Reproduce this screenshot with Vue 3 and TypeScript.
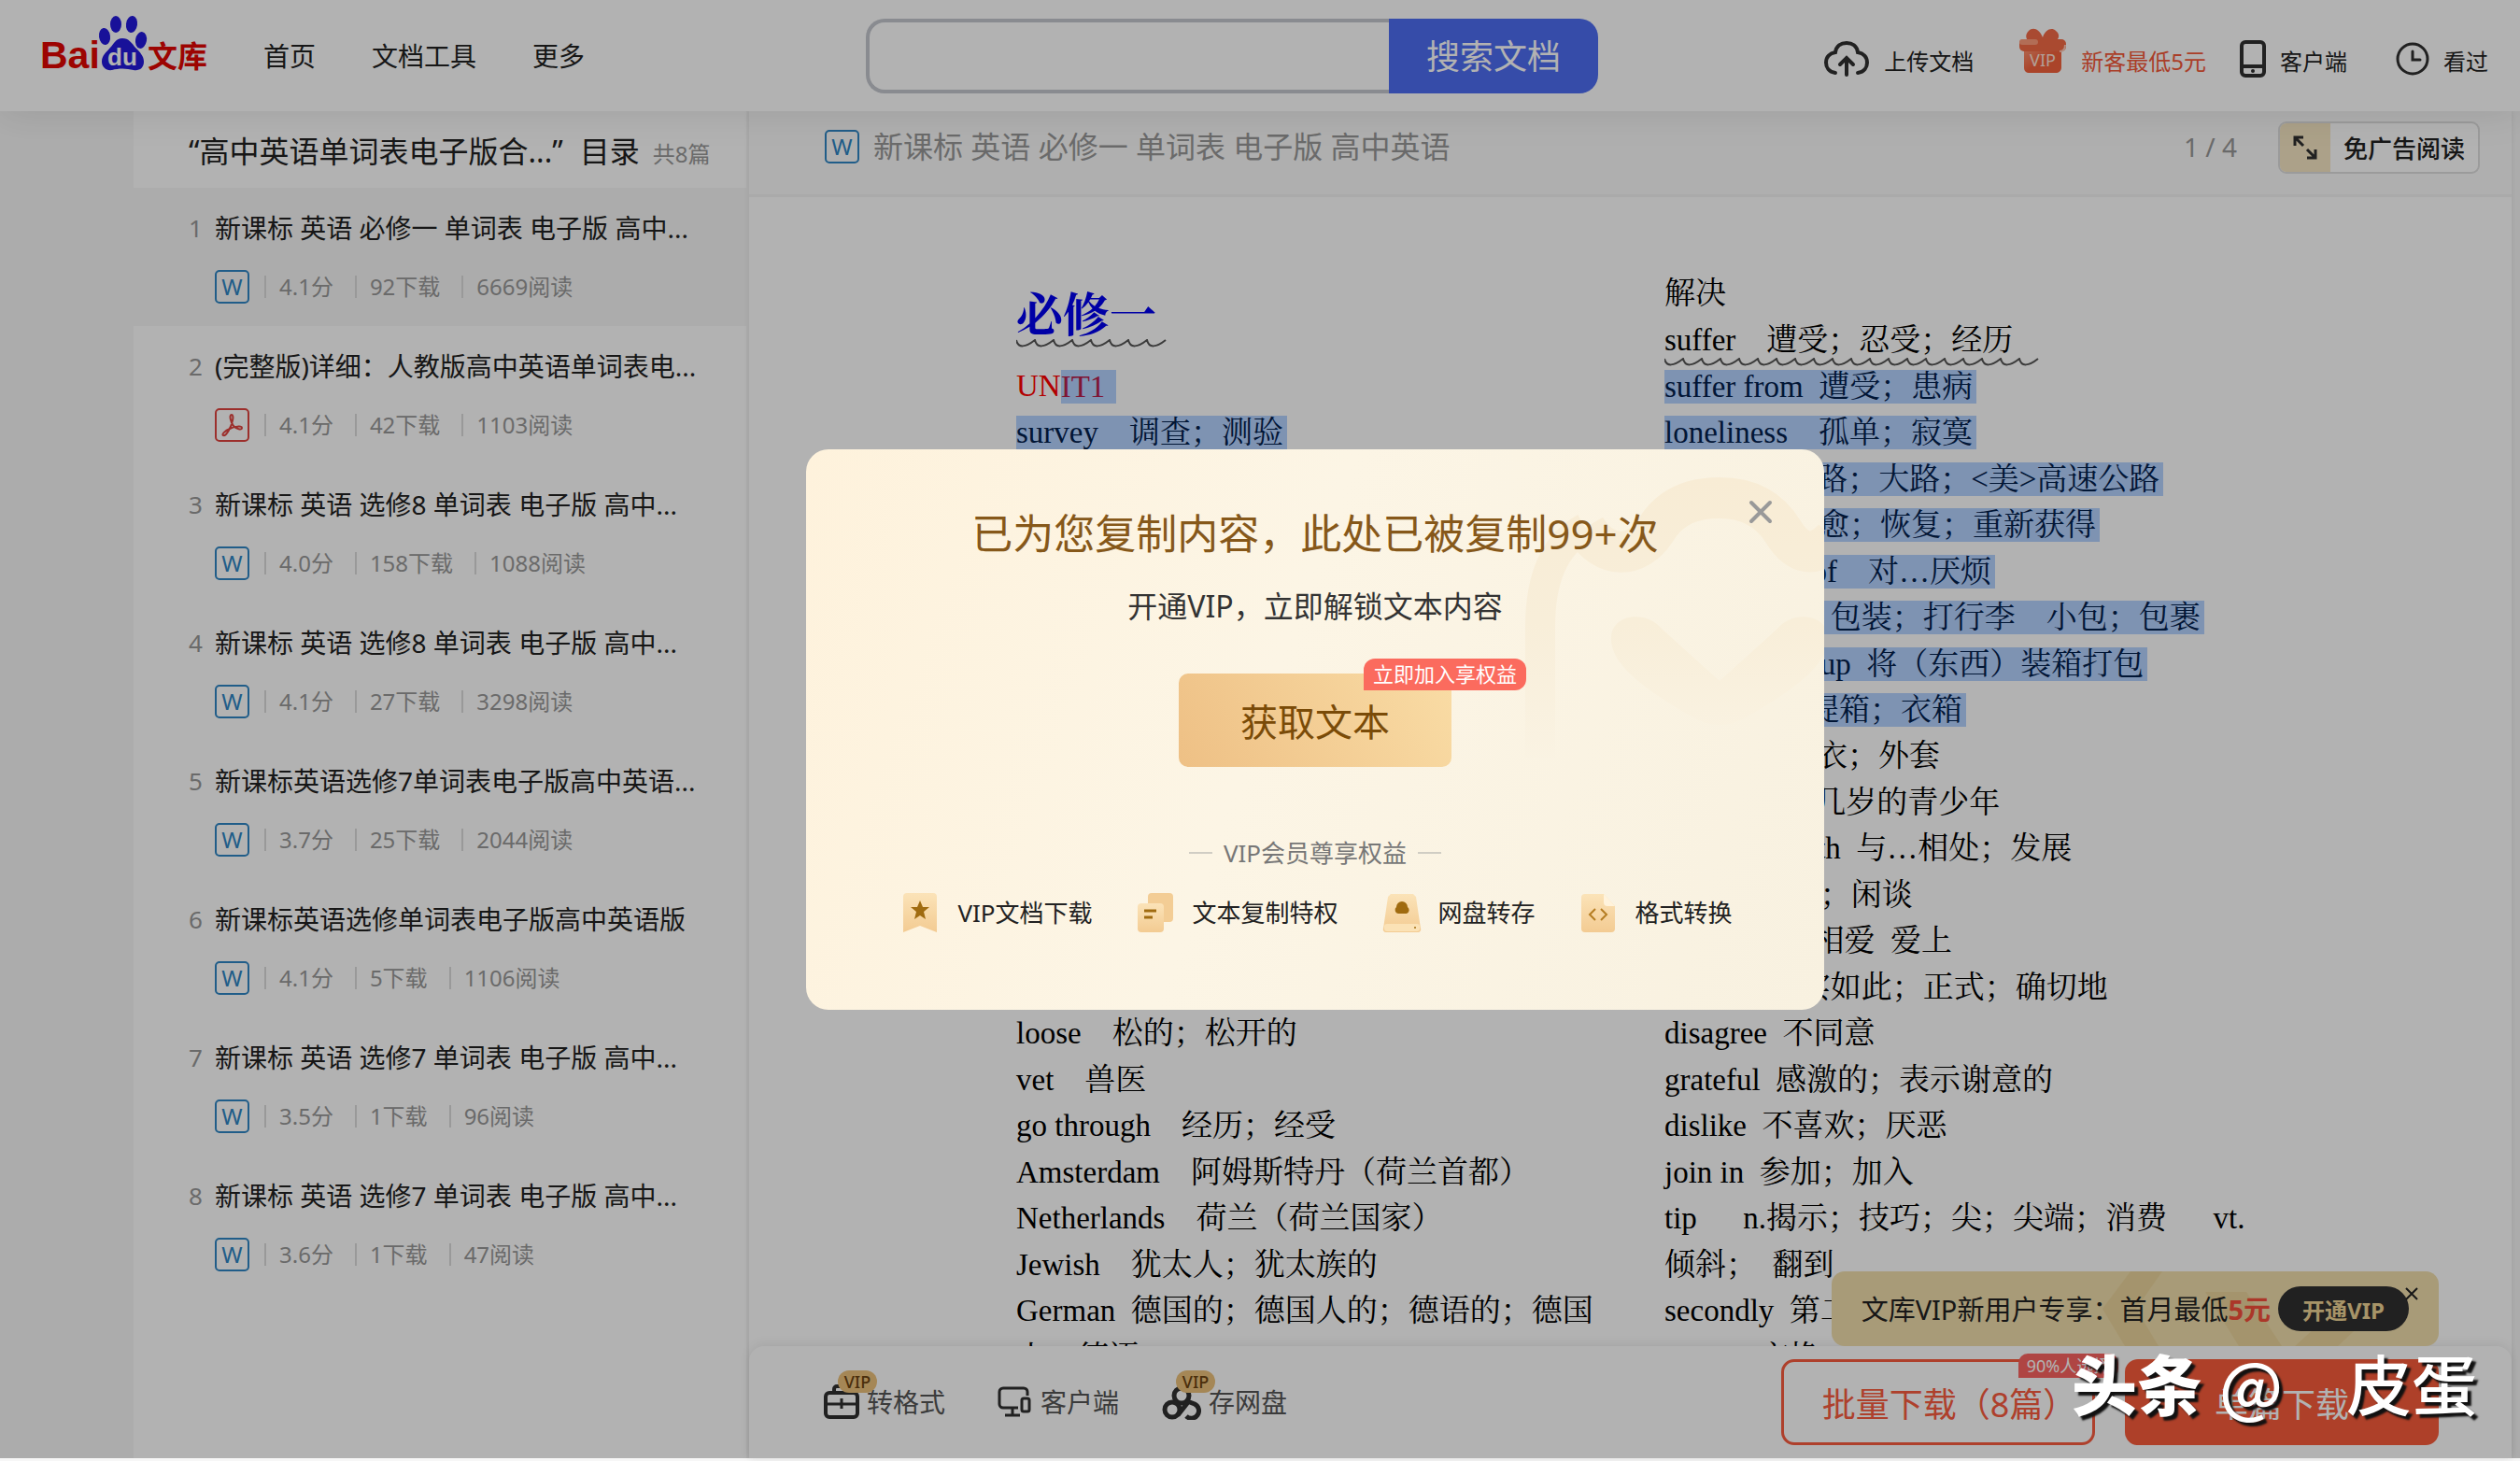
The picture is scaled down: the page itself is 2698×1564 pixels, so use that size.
<script setup lang="ts">
import { ref } from 'vue'

interface DocItem {
  title: string
  kind: 'word' | 'pdf'
  score: string
  downloads: string
  reads: string
}

interface Line {
  text: string
  marked?: boolean
  wavy?: boolean
}

const keyword = ref('')

const items: DocItem[] = [
  { title: '新课标 英语 必修一 单词表 电子版 高中...', kind: 'word', score: '4.1分', downloads: '92下载', reads: '6669阅读' },
  { title: '(完整版)详细：人教版高中英语单词表电...', kind: 'pdf', score: '4.1分', downloads: '42下载', reads: '1103阅读' },
  { title: '新课标 英语 选修8 单词表 电子版 高中...', kind: 'word', score: '4.0分', downloads: '158下载', reads: '1088阅读' },
  { title: '新课标 英语 选修8 单词表 电子版 高中...', kind: 'word', score: '4.1分', downloads: '27下载', reads: '3298阅读' },
  { title: '新课标英语选修7单词表电子版高中英语...', kind: 'word', score: '3.7分', downloads: '25下载', reads: '2044阅读' },
  { title: '新课标英语选修单词表电子版高中英语版', kind: 'word', score: '4.1分', downloads: '5下载', reads: '1106阅读' },
  { title: '新课标 英语 选修7 单词表 电子版 高中...', kind: 'word', score: '3.5分', downloads: '1下载', reads: '96阅读' },
  { title: '新课标 英语 选修7 单词表 电子版 高中...', kind: 'word', score: '3.6分', downloads: '1下载', reads: '47阅读' },
]

const leftLines: Line[] = [
  { text: 'loose　松的；松开的' },
  { text: 'vet　兽医' },
  { text: 'go through　经历；经受' },
  { text: 'Amsterdam　阿姆斯特丹（荷兰首都）' },
  { text: 'Netherlands　荷兰（荷兰国家）' },
  { text: 'Jewish　犹太人；犹太族的' },
  { text: 'German  德国的；德国人的；德语的；德国' },
  { text: '人；德语' },
]

const rightLines: Line[] = [
  { text: '解决' },
  { text: 'suffer　遭受；忍受；经历', wavy: true },
  { text: 'suffer from  遭受；患病', marked: true },
  { text: 'loneliness　孤单；寂寞', marked: true },
  { text: 'highway  公路；大路；<美>高速公路', marked: true },
  { text: 'recover　痊愈；恢复；重新获得', marked: true },
  { text: 'be/get tired of　对…厌烦', marked: true },
  { text: 'pack  捆扎；包装；打行李　小包；包裹', marked: true },
  { text: 'pack（sth）up  将（东西）装箱打包', marked: true },
  { text: 'suitcase  手提箱；衣箱', marked: true },
  { text: 'overcoat  大衣；外套' },
  { text: 'teenager  十几岁的青少年' },
  { text: 'get along with  与…相处；发展' },
  { text: 'gossip  闲话；闲谈' },
  { text: 'fall in love  相爱  爱上' },
  { text: 'exactly  确实如此；正式；确切地' },
  { text: 'disagree  不同意' },
  { text: 'grateful  感激的；表示谢意的' },
  { text: 'dislike  不喜欢；厌恶' },
  { text: 'join in  参加；加入' },
  { text: 'tip　  n.揭示；技巧；尖；尖端；消费　  vt.' },
  { text: '倾斜；  翻到' },
  { text: 'secondly  第二' },
  { text: 'swap　交换' },
]

/* One arc every 20 units: a short dip, then a long rise to the crest. */
function wave(count: number): string {
  let d = 'M0 1'
  for (let i = 0; i < count; i++) {
    const x = i * 20
    d += ` C${x + 2} 10 ${x + 10} 9 ${x + 20} 1`
  }
  return d
}
</script>

<template>
  <div class="page">
    <header class="top">
      <a class="logo" href="#" aria-label="Baidu 文库">
        <svg width="180" height="64" viewBox="0 0 180 64">
          <text x="0" y="57" class="logo-red" font-size="41">Bai</text>
          <g fill="#2319dc">
            <ellipse cx="81" cy="10" rx="6" ry="9" />
            <ellipse cx="98" cy="10" rx="6" ry="9" transform="rotate(8 98 10)" />
            <ellipse cx="69" cy="23" rx="6" ry="9" transform="rotate(-8 69 23)" />
            <ellipse cx="108" cy="27" rx="6" ry="9" transform="rotate(10 108 27)" />
            <path d="M88 25c7 0 10 5 14 10 5 5 9 9 9 15 0 7-5 10-11 9-8-2-16-2-23 0-6 1-11-3-11-9 0-7 5-10 9-15 4-4 6-10 13-10z" />
          </g>
          <text x="88" y="54" class="logo-du" font-size="26" text-anchor="middle">du</text>
          <text x="115" y="56" class="logo-red cjk" font-size="32">文库</text>
        </svg>
      </a>
      <nav class="nav">
        <a href="#">首页</a>
        <a href="#">文档工具</a>
        <a href="#">更多</a>
      </nav>
      <form class="search" @submit.prevent>
        <input v-model="keyword" type="text" aria-label="搜索文档" />
        <button type="submit">搜索文档</button>
      </form>
      <div class="tools">
        <a href="#" class="tool upload">
          <svg width="50" height="40" viewBox="0 0 50 40" fill="none" stroke="#303030" stroke-width="4" stroke-linecap="round">
            <path d="M13 35C6 34 3 29 3 24c0-6 4-10 10-11C14 6 19 3 25 3s11 3 12 10c6 1 10 5 10 11 0 5-3 10-10 11" />
            <path d="M25 37V19M18 26l7-7 7 7" />
          </svg>
          <span>上传文档</span>
        </a>
        <a href="#" class="tool gift">
          <svg width="52" height="50" viewBox="0 0 52 50">
            <defs>
              <linearGradient id="gift" x1="0" y1="0" x2="1" y2="1">
                <stop offset="0" stop-color="#ff9a78" />
                <stop offset="0.5" stop-color="#f4623d" />
                <stop offset="1" stop-color="#f4623d" />
              </linearGradient>
            </defs>
            <path d="M26 10C22 0 15-1 11 3c-4 4-3 8-1 10h31c3-3 3-7-1-10-4-4-11-2-14 7z" fill="#f26a48" />
            <path d="M6 20h40v22c0 4-3 6-6 6H12c-4 0-6-2-6-6z" fill="url(#gift)" />
            <rect x="1" y="12" width="50" height="13" rx="5" fill="#f46a45" />
            <rect x="1" y="12" width="20" height="6" rx="3" fill="#ff9c7c" />
            <path d="M50 18c0 5-2 7-6 7" fill="none" stroke="#ffc9b6" stroke-width="2" />
            <text x="26" y="41" font-size="18" text-anchor="middle" fill="#ffe4d8" class="sans">VIP</text>
          </svg>
          <span>新客最低5元</span>
        </a>
        <a href="#" class="tool phone">
          <svg width="28" height="42" viewBox="0 0 28 42" fill="none" stroke="#303030" stroke-width="4">
            <rect x="2" y="3" width="24" height="36" rx="4" />
            <path d="M2 29h24" />
            <circle cx="14" cy="34" r="2" fill="#303030" stroke="none" />
          </svg>
          <span>客户端</span>
        </a>
        <a href="#" class="tool seen">
          <svg width="36" height="38" viewBox="0 0 36 38" fill="none" stroke="#303030" stroke-width="3" stroke-linecap="round">
            <circle cx="18" cy="19" r="16" />
            <path d="M18 11v9h8" />
          </svg>
          <span>看过</span>
        </a>
      </div>
    </header>

    <div class="body">
      <aside class="side">
        <h2>“高中英语单词表电子版合...”<span class="dir">目录</span><small>共8篇</small></h2>
        <ol>
          <li v-for="(item, i) in items" :key="i" :class="{ on: i === 0 }">
            <span class="no">{{ i + 1 }}</span>
            <div class="entry">
              <a href="#">{{ item.title }}</a>
              <div class="meta">
                <span v-if="item.kind === 'word'" class="badge-w">W</span>
                <svg v-else width="37" height="36" viewBox="0 0 37 36" fill="none" stroke="#e0443f" stroke-width="2">
                  <rect x="1" y="1" width="35" height="34" rx="4" />
                  <path d="M18 7c-3 0-1 8 2 12 3 3 9 5 9 2s-9-1-13 1c-5 2-9 6-7 7 3 2 9-10 10-16 1-4 0-6-1-6z" />
                </svg>
                <span class="cell">{{ item.score }}</span>
                <span class="cell">{{ item.downloads }}</span>
                <span class="cell">{{ item.reads }}</span>
              </div>
            </div>
          </li>
        </ol>
      </aside>

      <main class="main">
        <div class="doc-head">
          <span class="badge-w">W</span>
          <h1>新课标 英语 必修一 单词表 电子版 高中英语</h1>
          <span class="pages">1 / 4</span>
          <button class="noad" type="button">
            <span class="noad-icon">
              <svg width="26" height="26" viewBox="0 0 26 26" fill="none" stroke="#303030" stroke-width="3">
                <path d="M2 11V2h9M2 2l9 9M24 15v9h-9M24 24l-9-9" />
              </svg>
            </span>
            <span class="noad-text">免广告阅读</span>
          </button>
        </div>

        <article class="paper">
          <div class="col">
            <h3><span>必修一</span><svg class="wave" width="162" height="10" viewBox="0 0 162 10"><path :d="wave(8)" /></svg></h3>
            <p class="red">UN<mark>IT1</mark></p>
            <p><mark>survey　调查；测验</mark></p>
            <div class="rest">
              <p v-for="(line, i) in leftLines" :key="i">{{ line.text }}</p>
            </div>
          </div>
          <div class="col">
            <p v-for="(line, i) in rightLines" :key="i">
              <mark v-if="line.marked">{{ line.text }}</mark>
              <template v-else>{{ line.text }}</template>
              <svg v-if="line.wavy" class="wave" width="402" height="10" viewBox="0 0 402 10"><path :d="wave(20)" /></svg>
            </p>
          </div>
        </article>

        <footer class="bar">
          <div class="promo">
            <svg class="promo-bg" width="330" height="80" viewBox="0 0 330 80">
              <path d="M30 0h34L36 40l24 40H24L0 40z" fill="#ebd59c" />
              <path d="M110 22h44l38 58h-46zM270 22h44l-62 58h-46z" fill="#ebd59c" />
            </svg>
            <span class="promo-text">文库VIP新用户专享：首月最低<b>5元</b></span>
            <button class="open" type="button">开通VIP</button>
            <button class="promo-x" type="button" aria-label="关闭">
              <svg width="14" height="14" viewBox="0 0 14 14" stroke="#222" stroke-width="2"><path d="M1 1l12 12M13 1L1 13" /></svg>
            </button>
          </div>
          <button class="act" type="button">
            <svg width="38" height="38" viewBox="0 0 38 38" fill="none" stroke="#303030" stroke-width="4">
              <path d="M11 9V5a3 3 0 013-3h10a3 3 0 013 3v4" />
              <rect x="2" y="9" width="34" height="26" rx="4" />
              <path d="M2 21h34M19 15v11" stroke-width="3" />
            </svg>
            <i>VIP</i><span>转格式</span>
          </button>
          <button class="act client" type="button">
            <svg width="36" height="34" viewBox="0 0 36 34" fill="none" stroke="#303030" stroke-width="3">
              <path d="M22 23H6a4 4 0 01-4-4V6a4 4 0 014-4h22a4 4 0 014 4v4" />
              <rect x="26" y="13" width="8" height="14" rx="2" />
              <path d="M16 23v8M8 31h16" />
            </svg>
            <span>客户端</span>
          </button>
          <button class="act disk" type="button">
            <svg width="42" height="38" viewBox="0 0 42 38" fill="none" stroke="#303030" stroke-width="5">
              <circle cx="21" cy="12" r="8" />
              <circle cx="11" cy="27" r="8" />
              <path d="M27 18l8 3a8 8 0 11-9 13M28 19L17 33" />
            </svg>
            <i>VIP</i><span>存网盘</span>
          </button>
          <div class="buys">
            <button class="batch" type="button">批量下载（8篇）<em>90%人选择</em></button>
            <button class="single" type="button">单篇下载</button>
          </div>
        </footer>
      </main>
    </div>

    <div class="mask">
      <section class="modal" role="dialog" aria-label="已为您复制内容">
        <svg class="modal-bg" width="340" height="400" viewBox="0 0 340 400" fill="none">
          <defs>
            <linearGradient id="fade" gradientUnits="userSpaceOnUse" x1="0" y1="30" x2="0" y2="340">
              <stop offset="0" stop-color="#f8ecd5" />
              <stop offset="0.5" stop-color="#f8eed9" />
              <stop offset="1" stop-color="#faf3e3" />
            </linearGradient>
          </defs>
          <path d="M36 330V190Q36 110 84 84" stroke="url(#fade)" stroke-width="32" />
          <path d="M84 84C104 118 140 118 160 86c16-26 40-34 68-34s52 10 68 36c16 26 34 28 54 8" stroke="url(#fade)" stroke-width="44" />
          <path d="M112 200c2-24 38-28 54-8l62 56 62-56c16-20 52-16 54 8 2 25-24 50-84 85q-32 20-64 0c-60-35-86-60-84-85z" fill="url(#fade)" />
        </svg>
        <button class="close" type="button" aria-label="关闭">
          <svg width="26" height="26" viewBox="0 0 26 26" stroke="#999" stroke-width="4" stroke-linecap="round"><path d="M3 3l20 20M23 3L3 23" /></svg>
        </button>
        <h2>已为您复制内容，此处已被复制99+次</h2>
        <p class="sub">开通VIP，立即解锁文本内容</p>
        <button class="get" type="button">获取文本<em>立即加入享权益</em></button>
        <p class="rights">VIP会员尊享权益</p>
        <svg width="0" height="0" class="defs">
          <defs>
            <linearGradient id="gold" x1="0" y1="0" x2="0" y2="1">
              <stop offset="0" stop-color="#fbe3b8" />
              <stop offset="1" stop-color="#f3cb92" />
            </linearGradient>
          </defs>
        </svg>
        <ul class="perks">
          <li>
            <svg width="42" height="44" viewBox="0 0 42 44">
              <path d="M2 5a4 4 0 014-4h28a4 4 0 014 4v38l-18-7-18 7z" fill="url(#gold)" />
              <path d="M20 9l3 7h7l-6 5 2 8-6-4-6 4 2-8-6-5h7z" fill="#a06b10" />
            </svg>
            <span>VIP文档下载</span>
          </li>
          <li>
            <svg width="42" height="44" viewBox="0 0 42 44">
              <rect x="12" y="1" width="27" height="31" rx="4" fill="#f3cd95" />
              <rect x="1" y="12" width="28" height="31" rx="4" fill="url(#gold)" />
              <path d="M8 20h13M8 27h9" stroke="#a06b10" stroke-width="3" />
            </svg>
            <span>文本复制特权</span>
          </li>
          <li>
            <svg width="42" height="44" viewBox="0 0 42 44">
              <path d="M9 2h24l3 3 5 34a3 3 0 01-3 4H4a3 3 0 01-3-4L6 5z" fill="url(#gold)" />
              <path d="M5 34h32a3 3 0 013 3v2a3 3 0 01-3 3H5a3 3 0 01-3-3v-2a3 3 0 013-3z" fill="#fbe2b6" />
              <circle cx="35" cy="38" r="1" fill="#a06b10" />
              <path d="M17 23a4 4 0 01-2-7 6 6 0 0112 0 4 4 0 01-1 7z" fill="#a06b10" />
            </svg>
            <span>网盘转存</span>
          </li>
          <li>
            <svg width="42" height="44" viewBox="0 0 42 44">
              <path d="M2 6a4 4 0 014-4h20l12 13v24a4 4 0 01-4 4H6a4 4 0 01-4-4z" fill="url(#gold)" />
              <path d="M26 2l12 13H30a4 4 0 01-4-4z" fill="#fff3dc" />
              <path d="M17 18l-6 6 6 6M23 18l6 6-6 6" fill="none" stroke="#b57d22" stroke-width="2" />
            </svg>
            <span>格式转换</span>
          </li>
        </ul>
      </section>
    </div>

    <div class="stamp"><b>头条</b><span class="at">@</span><span>皮蛋</span></div>
  </div>
</template>

<style>
body {
  margin: 0;
  background: #f7f7f7;
}
</style>

<style scoped>
* {
  box-sizing: border-box;
}
.page {
  position: relative;
  display: flex;
  flex-direction: column;
  height: 100vh;
  overflow: hidden;
  padding-bottom: 3px;
  background: #f7f7f7;
  color: #222;
  font-family: "Noto Sans", "Noto Sans CJK SC", sans-serif;
}
a {
  color: inherit;
  text-decoration: none;
}
button {
  border: 0;
  padding: 0;
  background: none;
  font-family: inherit;
  color: inherit;
}
h1, h2, h3, p, ol, ul {
  margin: 0;
  padding: 0;
  font-weight: 400;
  list-style: none;
}
svg {
  display: block;
  flex: none;
}
em, i {
  font-style: normal;
}

/* header */
.top {
  position: relative;
  z-index: 2;
  display: flex;
  align-items: center;
  flex: none;
  height: 119px;
  padding: 0 34px 0 43px;
  background: #fff;
  box-shadow: 0 2px 40px rgba(0, 0, 0, 0.1);
}
.logo {
  margin-bottom: 24px;
}
.logo-red {
  fill: #e10602;
  font-family: "Liberation Sans", sans-serif;
  font-weight: 700;
}
.logo-red.cjk {
  font-family: "Noto Sans CJK SC", sans-serif;
}
.logo-du {
  fill: #fff;
  font-family: "Liberation Sans", sans-serif;
  font-weight: 700;
}
.sans {
  font-family: "Noto Sans", sans-serif;
}
.nav {
  display: flex;
  gap: 60px;
  margin-left: 59px;
  font-size: 28px;
  line-height: 40px;
  white-space: nowrap;
}
.search {
  display: flex;
  width: 784px;
  height: 80px;
  margin-left: 301px;
}
.search input {
  flex: 1;
  min-width: 0;
  border: 4px solid #c4c7ce;
  border-right: 0;
  border-radius: 20px 0 0 20px;
  background: #fff;
  padding: 0 24px;
  font-size: 32px;
  outline: none;
}
.search button {
  width: 224px;
  padding-bottom: 2px;
  border-radius: 0 20px 20px 0;
  background: #4e6ef2;
  color: #fff;
  font-size: 36px;
}
.tools {
  display: flex;
  align-items: center;
  margin-left: auto;
  padding-top: 6px;
  font-size: 24px;
  line-height: 36px;
  white-space: nowrap;
}
.tool {
  display: flex;
  align-items: center;
  gap: 15px;
}
.tool span {
  padding-top: 6px;
}
.gift {
  margin-left: 48px;
  color: #f4593a;
}
.gift svg {
  margin-bottom: 16px;
}
.phone {
  margin-left: 36px;
}
.seen {
  margin-left: 52px;
}

/* body */
.body {
  display: flex;
  flex: 1;
  min-height: 0;
  padding: 0 9px 0 143px;
}
.side {
  flex: none;
  width: 656px;
  margin-right: 3px;
  background: #fff;
}
.side h2 {
  height: 82px;
  padding-left: 59px;
  font-size: 32px;
  line-height: 86px;
  white-space: nowrap;
}
.dir {
  margin-left: 18px;
}
.side small {
  margin-left: 14px;
  color: #999;
  font-size: 24px;
}
.side li {
  display: flex;
  height: 148px;
  padding: 23px 40px 0 59px;
}
.side li.on {
  background: #f6f6f6;
}
.no {
  width: 28px;
  color: #999;
  font-size: 26px;
  line-height: 40px;
}
.entry a {
  display: block;
  font-size: 28px;
  line-height: 40px;
  white-space: nowrap;
}
.meta {
  display: flex;
  align-items: center;
  height: 36px;
  margin-top: 25px;
  color: #999;
  font-size: 24px;
  line-height: 24px;
}
.badge-w {
  flex: none;
  width: 37px;
  height: 36px;
  border: 2px solid #2f86c4;
  border-radius: 5px;
  color: #2f86c4;
  font-size: 24px;
  line-height: 32px;
  text-align: center;
}
.cell {
  margin-left: 23px;
  padding-left: 14px;
  border-left: 2px solid #dcdcdc;
}
.badge-w + .cell,
svg + .cell {
  margin-left: 16px;
}

/* document */
.main {
  display: flex;
  flex: 1;
  flex-direction: column;
  min-width: 0;
  background: #fff;
  box-shadow: 0 0 6px rgba(0, 0, 0, 0.08);
}
.doc-head {
  display: flex;
  align-items: center;
  flex: none;
  height: 92px;
  padding: 0 34px 14px 81px;
  border-bottom: 3px solid #f4f4f4;
  background: #fbfbfb;
}
.doc-head h1 {
  margin-left: 15px;
  color: #999;
  font-size: 32px;
  line-height: 40px;
}
.pages {
  margin-left: auto;
  color: #999;
  font-size: 28px;
}
.noad {
  display: flex;
  height: 56px;
  margin: 2px 0 0 44px;
  border: 2px solid #dedede;
  border-radius: 9px;
  background: #fff;
  overflow: hidden;
}
.noad-icon {
  display: flex;
  align-items: center;
  justify-content: center;
  width: 54px;
  height: 100%;
  background: #f6e7c4;
}
.noad-text {
  padding: 0 14px;
  font-size: 26px;
  font-weight: 500;
  line-height: 54px;
}
.paper {
  display: flex;
  flex: 1;
  min-height: 0;
  padding: 79px 0 0 286px;
  overflow: hidden;
  color: #000;
  font-family: "Liberation Serif", "Noto Serif CJK SC", "Noto Sans CJK SC", serif;
  font-size: 33px;
  font-weight: 300;
  line-height: 1.5;
  white-space: pre;
}
.col {
  flex: none;
  width: 694px;
}
.col p,
.col h3 {
  position: relative;
  display: flex;
}
.col p {
  height: 1.5em;
}
.col h3 {
  height: 99px;
  color: #0000ee;
  font-size: 50px;
  font-weight: 700;
  line-height: 96px;
}
.rest {
  margin-top: 594px;
}
.wave {
  position: absolute;
  left: 0;
  bottom: -4px;
  fill: none;
  stroke: #555;
  stroke-width: 2;
}
h3 .wave {
  bottom: 16px;
}
mark {
  align-self: center;
  padding-right: 4px;
  background: #b5d3ff;
  color: #02204d;
  line-height: 36px;
}
.red {
  color: #f00;
}
.red mark {
  padding-right: 12px;
  color: #b5204d;
}

/* bottom bar */
.bar {
  position: relative;
  display: flex;
  align-items: center;
  flex: none;
  height: 120px;
  padding: 0 78px 0 80px;
  border-radius: 16px 16px 0 0;
  background: #fff;
  box-shadow: 0 -2px 12px rgba(0, 0, 0, 0.08);
}
.act {
  position: relative;
  display: flex;
  align-items: center;
  gap: 8px;
  color: #555;
  font-size: 28px;
  line-height: 40px;
}
.client {
  margin-left: 56px;
  gap: 10px;
}
.disk {
  margin-left: 46px;
}
.act i {
  position: absolute;
  left: 15px;
  top: -14px;
  width: 42px;
  height: 24px;
  border-radius: 12px;
  background: #ecc27c;
  color: #6b4310;
  font-size: 18px;
  font-weight: 500;
  line-height: 24px;
  text-align: center;
}
.buys {
  display: flex;
  gap: 32px;
  margin-left: auto;
}
.buys button {
  position: relative;
  width: 336px;
  height: 92px;
  border-radius: 14px;
  font-size: 36px;
  white-space: nowrap;
}
.buys .batch {
  padding-left: 24px;
  border: 3px solid #fa5c3f;
  color: #fa5c3f;
}
.batch em {
  position: absolute;
  right: -28px;
  top: -9px;
  width: 107px;
  height: 26px;
  border-radius: 10px 10px 10px 0;
  background: #fb6460;
  color: #fff;
  font-size: 18px;
  line-height: 26px;
}
.single {
  background: #fa5c3c;
  color: #fff;
}
.promo {
  position: absolute;
  right: 78px;
  bottom: 100%;
  display: flex;
  align-items: center;
  height: 80px;
  padding: 0 32px 0 32px;
  border-radius: 14px;
  background: #f1deac;
  overflow: hidden;
}
.promo-bg {
  position: absolute;
  left: 290px;
  top: 0;
}
.promo-text {
  position: relative;
  padding-top: 2px;
  font-size: 29px;
  line-height: 40px;
  white-space: nowrap;
}
.promo-text b {
  color: #f5503c;
}
.open {
  position: relative;
  width: 140px;
  height: 48px;
  margin-left: 8px;
  border-radius: 24px;
  background: #303030;
  color: #f0d596;
  font-size: 24px;
  font-weight: 700;
}
.promo-x {
  position: absolute;
  right: 22px;
  top: 17px;
}

/* dialog */
.mask {
  position: absolute;
  z-index: 5;
  inset: 0 0 3px 0;
  display: flex;
  align-items: center;
  justify-content: center;
  padding-left: 118px;
  background: rgba(0, 0, 0, 0.3);
}
.modal {
  position: relative;
  display: flex;
  flex-direction: column;
  align-items: center;
  width: 1090px;
  height: 600px;
  padding-top: 58px;
  border-radius: 24px;
  background: linear-gradient(110deg, #fef2dc 0%, #fcf5e5 45%, #f8f1e0 100%);
  overflow: hidden;
}
.modal > * {
  position: relative;
}
.modal .modal-bg {
  position: absolute;
  right: 0;
  top: 0;
}
.modal .defs {
  position: absolute;
}
.modal .close {
  position: absolute;
  right: 55px;
  top: 54px;
}
.modal h2 {
  color: #86581a;
  font-size: 44px;
  line-height: 64px;
}
.sub {
  margin-top: 22px;
  color: #333;
  font-size: 32px;
  line-height: 48px;
}
.get {
  width: 292px;
  height: 100px;
  margin-top: 48px;
  border-radius: 10px;
  background: linear-gradient(60deg, #eec085, #f9dca5);
  color: #7a4b08;
  font-size: 40px;
}
.get em {
  position: absolute;
  left: 198px;
  top: -16px;
  width: 174px;
  height: 34px;
  border-radius: 12px 12px 12px 0;
  background: #fb6b5e;
  color: #fff;
  font-size: 22px;
  line-height: 32px;
}
.rights {
  display: flex;
  align-items: center;
  gap: 12px;
  margin-top: 72px;
  color: #777;
  font-size: 26px;
  line-height: 40px;
}
.rights::before,
.rights::after {
  content: "";
  width: 25px;
  height: 2px;
  background: #d0cdc4;
}
.perks {
  display: flex;
  gap: 47px;
  margin-top: 22px;
  padding-left: 4px;
}
.perks li {
  display: flex;
  align-items: center;
  gap: 18px;
  color: #222;
  font-size: 26px;
  line-height: 44px;
}

/* author stamp */
.stamp {
  position: absolute;
  z-index: 6;
  right: 46px;
  bottom: 36px;
  display: flex;
  color: #fff;
  font-family: "Noto Sans CJK SC", sans-serif;
  font-size: 70px;
  font-weight: 500;
  line-height: 96px;
  text-shadow: 4px 4px 2px #111;
}
.stamp b {
  font-weight: 900;
}
.at {
  margin: 0 68px 0 18px;
}
</style>
